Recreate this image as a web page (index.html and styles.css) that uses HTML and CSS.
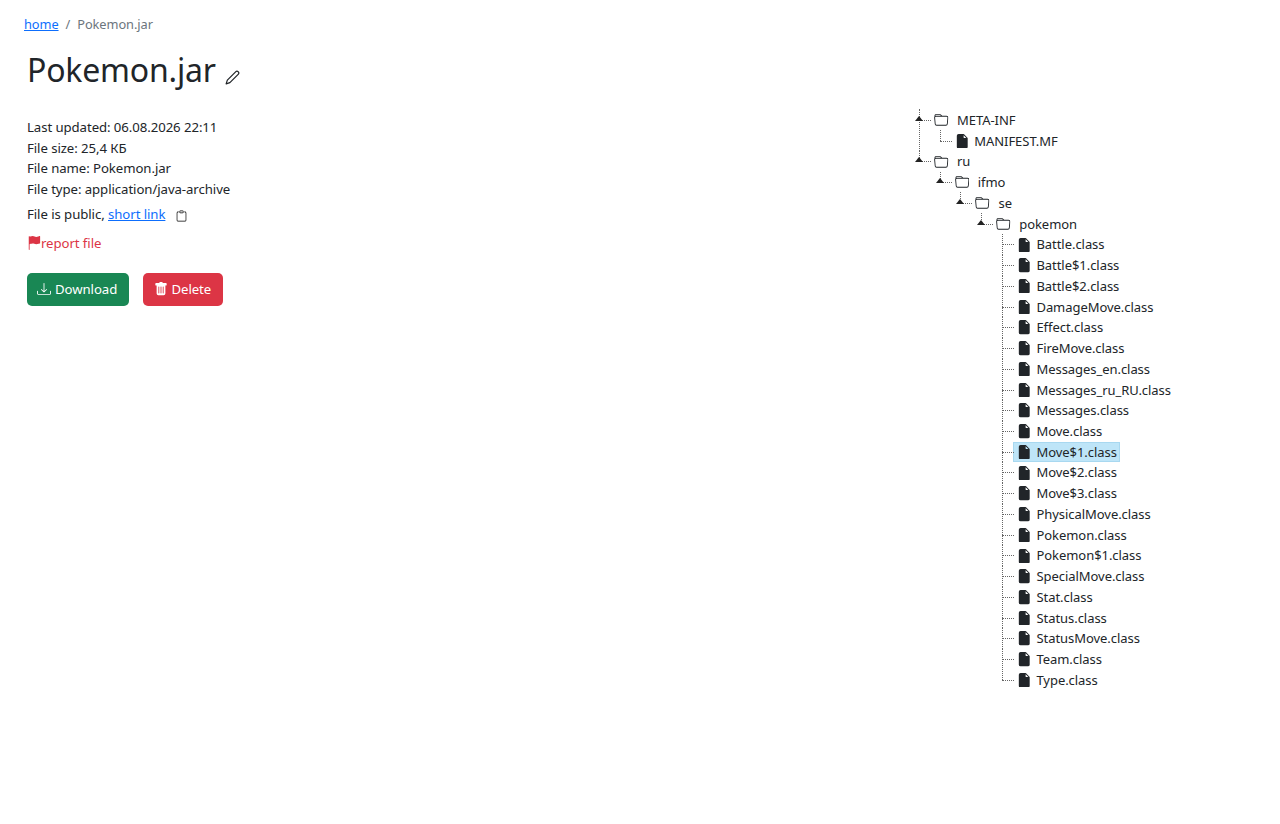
FILE: index.html
```html
<!DOCTYPE html>
<html lang="en">
<head>
<meta charset="utf-8">
<title>Pokemon.jar</title>
<link rel="stylesheet" href="styles.css">
</head>
<body>
<svg class="defs" aria-hidden="true">
  <symbol id="i-folder" viewBox="0 0 16 16"><path d="M.54 3.87.5 3a2 2 0 0 1 2-2h3.672a2 2 0 0 1 1.414.586l.828.828A2 2 0 0 0 9.828 3h3.982a2 2 0 0 1 1.992 2.181l-.637 7A2 2 0 0 1 13.174 14H2.826a2 2 0 0 1-1.991-1.819l-.637-7a2 2 0 0 1 .342-1.31zM2.19 4a1 1 0 0 0-.996 1.09l.637 7a1 1 0 0 0 .995.91h10.348a1 1 0 0 0 .995-.91l.637-7A1 1 0 0 0 13.81 4H2.19zm4.69-1.707A1 1 0 0 0 6.172 2H2.5a1 1 0 0 0-1 .981l.006.139C1.72 3.042 1.95 3 2.19 3h5.396l-.707-.707z"/></symbol>
  <symbol id="i-file" viewBox="0 0 16 16"><path d="M4 0h5.293A1 1 0 0 1 10 .293L13.707 4a1 1 0 0 1 .293.707V14a2 2 0 0 1-2 2H4a2 2 0 0 1-2-2V2a2 2 0 0 1 2-2zm5.5 1.5v2a1 1 0 0 0 1 1h2l-3-3z"/></symbol>
</svg>
<main class="page">
  <section class="info">
    <nav class="crumbs"><a href="#">home</a><span class="sep">/</span><span class="current">Pokemon.jar</span></nav>
    <h1 class="title">Pokemon.jar<svg class="pencil" viewBox="0 0 16 16"><path d="M11.6 1.7a1.6 1.6 0 0 1 2.3 0l.4.4a1.6 1.6 0 0 1 0 2.3L5.2 13.5 1.2 14.8 2.5 10.8z"/></svg></h1>
    <div class="meta">
      <div>Last updated: 06.08.2026 22:11</div>
      <div>File size: 25,4 КБ</div>
      <div>File name: Pokemon.jar</div>
      <div>File type: application/java-archive</div>
      <div class="public">File is public, <a href="#">short link</a><svg class="clip" viewBox="0 0 16 16"><path d="M4 1.5H3a2 2 0 0 0-2 2V14a2 2 0 0 0 2 2h10a2 2 0 0 0 2-2V3.5a2 2 0 0 0-2-2h-1v1h1a1 1 0 0 1 1 1V14a1 1 0 0 1-1 1H3a1 1 0 0 1-1-1V3.5a1 1 0 0 1 1-1h1v-1z"/><path d="M9.5 1a.5.5 0 0 1 .5.5v1a.5.5 0 0 1-.5.5h-3a.5.5 0 0 1-.5-.5v-1a.5.5 0 0 1 .5-.5h3zm-3-1A1.5 1.5 0 0 0 5 1.5v1A1.5 1.5 0 0 0 6.5 4h3A1.5 1.5 0 0 0 11 2.5v-1A1.5 1.5 0 0 0 9.5 0h-3z"/></svg></div>
    </div>
    <div class="report"><svg class="flag" viewBox="0 0 16 16"><path d="M14.778.085A.5.5 0 0 1 15 .5V8a.5.5 0 0 1-.314.464L14.5 8l.186.464-.003.001-.006.003-.023.009a12.435 12.435 0 0 1-.397.15c-.264.095-.631.223-1.047.35-.816.252-1.879.523-2.71.523-.847 0-1.548-.28-2.158-.525l-.028-.01C7.68 8.71 7.14 8.5 6.5 8.5c-.7 0-1.638.23-2.437.477A19.626 19.626 0 0 0 3 9.342V15.5a.5.5 0 0 1-1 0V.5a.5.5 0 0 1 1 0v.282c.226-.079.496-.17.79-.26C4.606.272 5.67 0 6.5 0c.84 0 1.524.277 2.121.519l.043.018C9.286.788 9.828 1 10.5 1c.7 0 1.638-.23 2.437-.477a19.587 19.587 0 0 0 1.349-.476l.019-.007.004-.002z"/></svg>report file</div>
    <div class="actions">
      <button class="btn green"><svg class="bi" viewBox="0 0 16 16"><path d="M.5 9.9a.5.5 0 0 1 .5.5v2.5a1 1 0 0 0 1 1h12a1 1 0 0 0 1-1v-2.5a.5.5 0 0 1 1 0v2.5a2 2 0 0 1-2 2H2a2 2 0 0 1-2-2v-2.5a.5.5 0 0 1 .5-.5z"/><path d="M7.646 11.854a.5.5 0 0 0 .708 0l3-3a.5.5 0 0 0-.708-.708L8.5 10.293V1.5a.5.5 0 0 0-1 0v8.793L5.354 8.146a.5.5 0 1 0-.708.708l3 3z"/></svg>Download</button>
      <button class="btn red"><svg class="bi" viewBox="0 0 16 16"><path d="M2.5 1a1 1 0 0 0-1 1v1a1 1 0 0 0 1 1H3v9a2 2 0 0 0 2 2h6a2 2 0 0 0 2-2V4h.5a1 1 0 0 0 1-1V2a1 1 0 0 0-1-1H10a1 1 0 0 0-1-1H7a1 1 0 0 0-1 1H2.5zm3 4a.5.5 0 0 1 .5.5v7a.5.5 0 0 1-1 0v-7a.5.5 0 0 1 .5-.5zM8 5a.5.5 0 0 1 .5.5v7a.5.5 0 0 1-1 0v-7A.5.5 0 0 1 8 5zm3 .5v7a.5.5 0 0 1-1 0v-7a.5.5 0 0 1 1 0z"/></svg>Delete</button>
    </div>
  </section>
  <section class="tree-wrap">
    <ul class="tree root">
      <li class="folder"><div class="row"><svg class="ic"><use href="#i-folder"/></svg><span class="label">META-INF</span></div>
        <ul class="tree">
          <li class="last"><div class="row"><svg class="ic"><use href="#i-file"/></svg><span class="label">MANIFEST.MF</span></div></li>
        </ul>
      </li>
      <li class="folder last"><div class="row"><svg class="ic"><use href="#i-folder"/></svg><span class="label">ru</span></div>
        <ul class="tree">
          <li class="folder last"><div class="row"><svg class="ic"><use href="#i-folder"/></svg><span class="label">ifmo</span></div>
            <ul class="tree">
              <li class="folder last"><div class="row"><svg class="ic"><use href="#i-folder"/></svg><span class="label">se</span></div>
                <ul class="tree">
                  <li class="folder last"><div class="row"><svg class="ic"><use href="#i-folder"/></svg><span class="label">pokemon</span></div>
                    <ul class="tree">
                      <li><div class="row"><svg class="ic"><use href="#i-file"/></svg><span class="label">Battle.class</span></div></li>
                      <li><div class="row"><svg class="ic"><use href="#i-file"/></svg><span class="label">Battle$1.class</span></div></li>
                      <li><div class="row"><svg class="ic"><use href="#i-file"/></svg><span class="label">Battle$2.class</span></div></li>
                      <li><div class="row"><svg class="ic"><use href="#i-file"/></svg><span class="label">DamageMove.class</span></div></li>
                      <li><div class="row"><svg class="ic"><use href="#i-file"/></svg><span class="label">Effect.class</span></div></li>
                      <li><div class="row"><svg class="ic"><use href="#i-file"/></svg><span class="label">FireMove.class</span></div></li>
                      <li><div class="row"><svg class="ic"><use href="#i-file"/></svg><span class="label">Messages_en.class</span></div></li>
                      <li><div class="row"><svg class="ic"><use href="#i-file"/></svg><span class="label">Messages_ru_RU.class</span></div></li>
                      <li><div class="row"><svg class="ic"><use href="#i-file"/></svg><span class="label">Messages.class</span></div></li>
                      <li><div class="row"><svg class="ic"><use href="#i-file"/></svg><span class="label">Move.class</span></div></li>
                      <li><div class="row selected"><svg class="ic"><use href="#i-file"/></svg><span class="label">Move$1.class</span></div></li>
                      <li><div class="row"><svg class="ic"><use href="#i-file"/></svg><span class="label">Move$2.class</span></div></li>
                      <li><div class="row"><svg class="ic"><use href="#i-file"/></svg><span class="label">Move$3.class</span></div></li>
                      <li><div class="row"><svg class="ic"><use href="#i-file"/></svg><span class="label">PhysicalMove.class</span></div></li>
                      <li><div class="row"><svg class="ic"><use href="#i-file"/></svg><span class="label">Pokemon.class</span></div></li>
                      <li><div class="row"><svg class="ic"><use href="#i-file"/></svg><span class="label">Pokemon$1.class</span></div></li>
                      <li><div class="row"><svg class="ic"><use href="#i-file"/></svg><span class="label">SpecialMove.class</span></div></li>
                      <li><div class="row"><svg class="ic"><use href="#i-file"/></svg><span class="label">Stat.class</span></div></li>
                      <li><div class="row"><svg class="ic"><use href="#i-file"/></svg><span class="label">Status.class</span></div></li>
                      <li><div class="row"><svg class="ic"><use href="#i-file"/></svg><span class="label">StatusMove.class</span></div></li>
                      <li><div class="row"><svg class="ic"><use href="#i-file"/></svg><span class="label">Team.class</span></div></li>
                      <li class="last"><div class="row"><svg class="ic"><use href="#i-file"/></svg><span class="label">Type.class</span></div></li>
                    </ul>
                  </li>
                </ul>
              </li>
            </ul>
          </li>
        </ul>
      </li>
    </ul>
  </section>
</main>
</body>
</html>
```
FILE: styles.css
```css
* { box-sizing: border-box; }
html, body { margin: 0; padding: 0; background: #fff; }
body {
  font-family: "Noto Sans", "Open Sans", sans-serif;
  font-size: 13.2px;
  letter-spacing: -0.07px;
  line-height: 20.74px;
  color: #212529;
}
a { color: #0d6efd; text-decoration: underline; }
.defs { display: none; }
.page { display: flex; justify-content: space-between; height: 824px; }
.info { width: 400px; padding: 14px 0 0 27px; }
.crumbs { display: flex; margin-left: -3px; height: 20px; font-size: 12.8px; }
.sep { color: #6c757d; padding: 0 7px; }
.current { color: #6c757d; }
.title { margin: 15px 0 0; font-size: 32px; letter-spacing: -0.2px; font-weight: 400; line-height: 41px; }
.pencil { width: 15px; height: 15px; margin-left: 9px; vertical-align: -3px; fill: none; stroke: #212529; stroke-width: 1.3; stroke-linejoin: round; }
.meta { margin-top: 27px; }
.public { margin-top: 4px; }
.clip { width: 11px; height: 12px; margin-left: 11px; vertical-align: -3px; }
.report { margin-top: 8px; color: #dc3545; display: flex; align-items: center; height: 21px; }
.flag { width: 14px; height: 14px; fill: #dc3545; }
.actions { display: flex; gap: 13.5px; margin-top: 19px; }
.btn {
  display: flex; align-items: center; gap: 4px;
  height: 33px; padding: 0 11px;
  border: 0; border-radius: 5px;
  color: #fff;
  font: inherit;
  letter-spacing: inherit;
}
.btn .bi { width: 14px; height: 14px; fill: #fff; flex: none; }
.green { background: #198754; width: 102px; padding-left: 10px; }
.red { background: #dc3545; width: 80px; gap: 4px; }
.tree-wrap { width: 365px; padding-top: 110px; font-size: 13px; letter-spacing: -0.05px; }
.tree { list-style: none; margin: 0; padding: 0; }
.tree .tree { margin-left: 20.74px; }
.tree li { position: relative; }
.tree li::before {
  content: ""; position: absolute; left: 4px; top: -0.5px; bottom: 0;
  border-left: 1px dotted #666;
}
.tree li.last::before { bottom: auto; height: 11px; }
.tree li.folder:not(.last)::before { top: -1px; }
.tree li > .row::before {
  content: ""; position: absolute; left: 4px; top: 10px; width: 12px;
  border-top: 1px dotted #666;
}
.tree li.folder > .row::after {
  content: ""; position: absolute; left: 0; top: 6px;
  border-style: solid; border-width: 0 4px 5px; border-color: transparent transparent #222;
}
.row {
  display: inline-flex; align-items: center;
  height: 20.74px; margin-left: 15px; padding: 0 3px 0 4px;
  vertical-align: top; white-space: nowrap;
}
.selected { background: #bee5f8; box-shadow: inset 0 0 0 1px #a8d8f0; }
.ic { width: 14.5px; height: 14.5px; fill: #212529; flex: none; }
.label { margin-left: 5px; }
.folder > .row > .label { margin-left: 8.5px; }
```
